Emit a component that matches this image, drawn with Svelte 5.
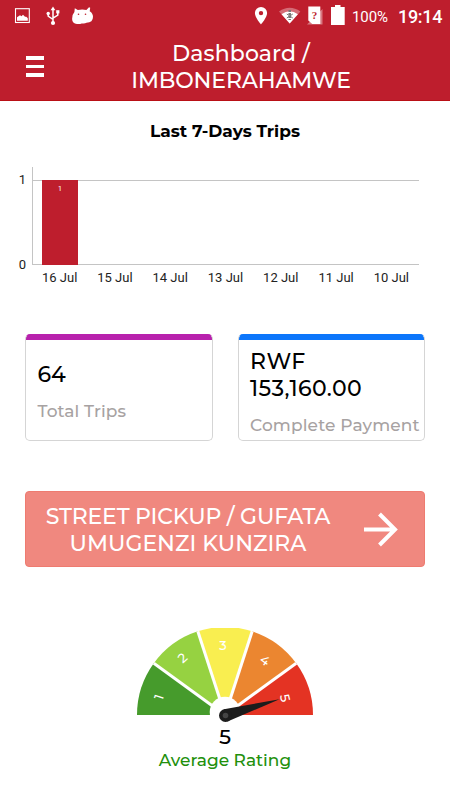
<script>
    const menuLines = [0, 1, 2]
    const days = [
        { label: "16 Jul", trips: 1 },
        { label: "15 Jul", trips: 0 },
        { label: "14 Jul", trips: 0 },
        { label: "13 Jul", trips: 0 },
        { label: "12 Jul", trips: 0 },
        { label: "11 Jul", trips: 0 },
        { label: "10 Jul", trips: 0 },
    ]
    const maxTrips = 1

    const cx = 88
    const cy = 87
    const radius = 88
    const segments = [
        { n: 1, color: "#469b2c", x: 22, y: 69, turn: -72 },
        { n: 2, color: "#96d241", x: 45.5, y: 30, turn: -42 },
        { n: 3, color: "#f9ee50", x: 86, y: 17, turn: 0 },
        { n: 4, color: "#eb8630", x: 128, y: 32.5, turn: 36 },
        { n: 5, color: "#e43323", x: 148, y: 70, turn: 76 },
    ]

    function rim(i) {
        const a = Math.PI - (i * Math.PI) / 5
        return `${cx + radius * Math.cos(a)} ${cy - radius * Math.sin(a)}`
    }
</script>

<div class="screen">
    <header>
        <div class="status">
            <svg class="left" width="100" height="32" viewBox="0 0 100 32" fill="#fff">
                <rect x="15.5" y="8.7" width="13.8" height="13.8" fill="none" stroke="#fff" stroke-width="1.1" />
                <path d="M17 20.7v-3.4l3-2 1.5 1 1.5-1.6 2 2h1.3l1.5 1.5v2.5z" />
                <path d="M53 8v15M48.2 13v3.2l4.8 3.3M57.8 12v3.2l-4.8 3" fill="none" stroke="#fff" stroke-width="1.5" />
                <path d="M53 6.5l2.4 3.7h-4.8z" />
                <circle cx="53" cy="23" r="2.1" />
                <circle cx="48.2" cy="13.5" r="1.7" />
                <rect x="56.2" y="10.2" width="3.2" height="3.2" />
                <path d="M74.8 8.2l3 1.8q4.5-1.2 8.6 0L89 7.2l1.2.6-.5 3.4q3.3 2 3.3 5.6 0 5.8-6.5 6-1.8 1.2-4.8.6-1.5.8-4.7.6-4.8-.3-4.9-5-.3-4 2.3-6.9z" />
                <circle cx="78.5" cy="14.3" r=".8" fill="#be1e2d" />
                <circle cx="85.5" cy="14.3" r=".8" fill="#be1e2d" />
            </svg>
            <svg class="right" width="96" height="32" viewBox="250 0 96 32" fill="#fff">
                <path d="M261 7a6.1 6.1 0 0 0-6.1 6.1c0 4.5 6.1 11.4 6.1 11.4s6.1-6.9 6.1-11.4A6.1 6.1 0 0 0 261 7zm0 8.3a2.2 2.2 0 1 1 0-4.4 2.2 2.2 0 0 1 0 4.4z" fill-rule="evenodd" />
                <path d="M289.7 23.5L279 11.5q10.7-7.5 21.4 0z" opacity=".35" />
                <path d="M289.7 23.5l-8.2-9.3q8.2-6 16.4 0z" />
                <path d="M289.7 10v10" stroke="#777" stroke-width="2.5" stroke-dasharray="2 1" />
                <path d="M286.8 14l6 4M292.8 14l-6 4" fill="none" stroke="#777" stroke-width="1" />
                <path d="M307 24.5L322.5 9v15.5z" opacity=".4" />
                <path d="M308.3 6.5h12V24h-8l-4-3.5z" />
                <text x="314.4" y="19" text-anchor="middle" class="query">?</text>
                <path d="M335 5h5.5v2h4.2v18H331V7h4z" />
            </svg>
            <span class="battery">100%</span>
            <span class="clock">19:14</span>
        </div>
        <div class="toolbar">
            <div class="menu">
                {#each menuLines as line (line)}
                    <span></span>
                {/each}
            </div>
            <h1><span class="dash">Dashboard /</span><br />IMBONERAHAMWE</h1>
        </div>
    </header>

    <h2>Last 7-Days Trips</h2>

    <div class="chart">
        <div class="scale"><span>1</span><span>0</span></div>
        <div class="plot">
            <div class="bars">
                {#each days as day}
                    <div class="slot">
                        {#if day.trips}
                            <div class="bar" style={`height: ${(day.trips / maxTrips) * 100}%`}>{day.trips}</div>
                        {/if}
                    </div>
                {/each}
            </div>
            <div class="days">
                {#each days as day}
                    <span>{day.label}</span>
                {/each}
            </div>
        </div>
    </div>

    <div class="cards">
        <div class="card purple">
            <strong>64</strong>
            <span class="total">Total Trips</span>
        </div>
        <div class="card blue">
            <strong>RWF<br />153,160.00</strong>
            <span class="payment">Complete Payment</span>
        </div>
    </div>

    <button class="pickup">
        <span><i>STREET PICKUP / GUFATA</i><br />UMUGENZI KUNZIRA</span>
        <svg width="36" height="36" viewBox="0 0 36 36" fill="none" stroke="#fff" stroke-width="4">
            <path d="M0 18.5h31M15.5 3L31 18.5 15.5 34" />
        </svg>
    </button>

    <div class="rating">
        <svg width="176" height="96" viewBox="0 0 176 96">
            {#each segments as seg, i}
                <path d={`M${cx} ${cy}L${rim(i)}A${radius} ${radius} 0 0 1 ${rim(i + 1)}Z`} fill={seg.color} />
            {/each}
            {#each [1, 2, 3, 4] as i}
                <path d={`M${cx} ${cy}L${rim(i)}`} stroke="#fff" stroke-width="3" />
            {/each}
            <circle cx="88" cy="84" r="15.3" fill="#fff" />
            {#each segments as seg}
                <text transform={`translate(${seg.x} ${seg.y}) rotate(${seg.turn})`} y="4.5" text-anchor="middle">{seg.n}</text>
            {/each}
            <path d="M87 81.2L142.5 71.3 90.5 93.5z" fill="#1c1c1c" />
            <circle cx="88.5" cy="87.5" r="6.5" fill="#1c1c1c" />
            <circle cx="88.5" cy="87.5" r="2.8" fill="#444" />
        </svg>
        <div class="score">5</div>
        <div class="caption">Average Rating</div>
    </div>
</div>

<style>
    :global(body) {
        margin: 0;
        background: #fff;
    }

    .screen {
        width: 450px;
        height: 800px;
        overflow: hidden;
        background: #fff;
        color: #000;
        font-family: Montserrat, Inter, sans-serif;
    }

    header {
        height: 101px;
        box-sizing: border-box;
        background: #be1e2d;
        border-bottom: 1px solid #b90f16;
        color: #fff;
    }

    .status {
        display: flex;
        height: 32px;
        font-family: Roboto, sans-serif;
    }

    .status .right {
        margin-left: 150px;
    }

    .query {
        font: bold 11px "Liberation Serif", serif;
        fill: #be1e2d;
    }

    .battery {
        margin-left: 6px;
        width: 46px;
        font-size: 15px;
        line-height: 34px;
        letter-spacing: -0.1px;
    }

    .clock {
        font-size: 18px;
        font-weight: 500;
        line-height: 33px;
        letter-spacing: -0.3px;
    }

    .toolbar {
        display: flex;
        padding: 8px 0 0 26px;
    }

    .menu {
        display: flex;
        flex-direction: column;
        gap: 5px;
        margin-top: 16px;
        width: 18px;
    }

    .menu span {
        height: 3.5px;
        background: #fff;
    }

    h1 {
        margin: 0 0 0 66px;
        width: 262px;
        font-size: 22px;
        font-weight: 500;
        line-height: 27px;
        text-align: center;
        letter-spacing: -0.15px;
    }

    .dash {
        letter-spacing: 0.1px;
    }

    h2 {
        margin: 20px 0 0;
        font-size: 17px;
        font-weight: 700;
        line-height: 20px;
        text-align: center;
    }

    .chart {
        display: flex;
        height: 120px;
        margin: 26px 31px 0 0;
        font-family: Roboto, sans-serif;
        font-size: 13px;
        color: #222;
    }

    .scale {
        display: flex;
        flex-direction: column;
        justify-content: space-between;
        width: 26px;
        height: 106px;
        padding-top: 5px;
        box-sizing: border-box;
        margin-right: 6px;
        text-align: right;
        line-height: 16px;
    }

    .plot {
        flex: 1;
    }

    .bars {
        display: flex;
        height: 98px;
        box-sizing: border-box;
        padding-top: 13px;
        border-left: 1px solid #c4c4c4;
        border-bottom: 1px solid #c4c4c4;
        margin-bottom: 4px;
    }

    .slot {
        flex: 1;
        border-top: 1px solid #c4c4c4;
    }

    .bar {
        width: 36px;
        margin: -1px 0 0 9px;
        padding: 5px 0 1px;
        max-height: 79px;
        background: #be1e2d;
        color: #fff;
        font-size: 7px;
        line-height: 8px;
        text-align: center;
    }

    .days {
        display: flex;
        line-height: 17px;
    }

    .days span {
        flex: 1;
        text-align: center;
        white-space: nowrap;
    }

    .cards {
        display: flex;
        gap: 25px;
        margin: 47px 25px 0;
    }

    .card {
        display: flex;
        flex-direction: column;
        justify-content: center;
        flex: 1 1 0;
        min-width: 0;
        height: 107px;
        box-sizing: border-box;
        padding: 8px 0 0 11.5px;
        border: 1px solid #d5d5d5;
        border-radius: 5px;
        background: linear-gradient(var(--accent) 6px, #fff 6px);
        background-origin: border-box;
        border-top-color: var(--accent);
    }

    .purple {
        --accent: #b821ad;
    }

    .blue {
        --accent: #0c76fb;
    }

    .card strong {
        font-size: 22px;
        font-weight: 500;
        line-height: 27px;
        letter-spacing: 0.4px;
    }

    .purple strong {
        letter-spacing: 0;
    }

    .card span {
        margin-top: 13px;
        color: #a7a2a2;
        font-size: 17px;
        font-weight: 500;
        line-height: 21px;
        white-space: nowrap;
    }

    .card .total {
        letter-spacing: 0.1px;
    }

    .card .payment {
        letter-spacing: 0.15px;
    }

    .pickup {
        display: flex;
        align-items: center;
        width: 400px;
        height: 76px;
        margin: 50px 25px 0;
        padding: 1px 0 0 12px;
        border: 1px solid #ee7b70;
        border-radius: 4px;
        background: #f0887f;
        color: #fff;
        font-family: inherit;
        font-size: 22px;
        font-weight: 500;
        line-height: 27px;
        text-align: center;
    }

    .pickup span {
        width: 300px;
        white-space: nowrap;
    }

    .pickup i {
        font-style: normal;
        letter-spacing: -0.18px;
    }

    .pickup svg {
        margin: -1px 0 0 26px;
    }

    .rating {
        display: flex;
        flex-direction: column;
        align-items: center;
        margin-top: 61px;
        font-weight: 500;
    }

    .rating text {
        fill: #fff;
        font-size: 13px;
    }

    .score {
        font-size: 21px;
        line-height: 26px;
    }

    .caption {
        color: #22900c;
        font-size: 17px;
        line-height: 21px;
    }
</style>
